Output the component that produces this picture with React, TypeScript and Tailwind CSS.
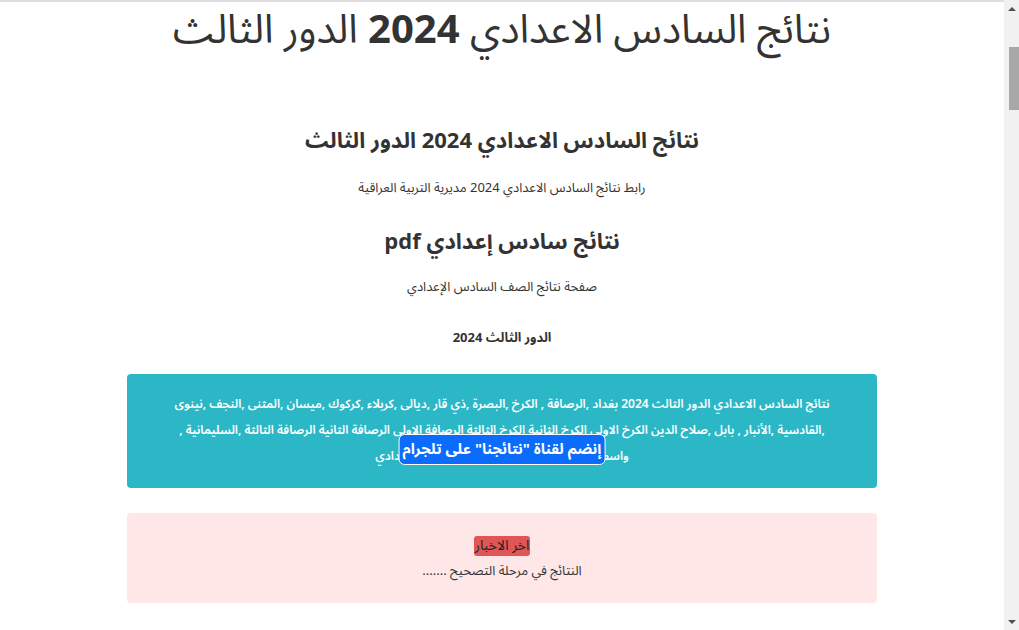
import React from "react";

const lines = [
  "نتائج السادس الاعدادي الدور الثالث 2024 بغداد ,الرصافة , الكرخ ,البصرة ,ذي قار ,ديالى ,كربلاء ,كركوك ,ميسان ,المثنى ,النجف ,نينوى",
  ",القادسية ,الأنبار , بابل ,صلاح الدين الكرخ الاولى الكرخ الثانية الكرخ الثالثة الرصافة الاولى الرصافة الثانية الرصافة الثالثة ,السليمانية ,",
  "واسط ,اربيل ,دهوك ,حلبجة نتائج السادس الاعدادي",
];

function Scrollbar() {
  return (
    <div className="flex h-full w-[15px] shrink-0 flex-col items-center bg-[#f1f1f1]">
      <div className="flex h-[17px] items-center justify-center">
        <div className="h-0 w-0 border-x-[4px] border-b-[4px] border-x-transparent border-b-[#505050]" />
      </div>
      <div className="mt-[30px] h-[63px] w-[10px] self-end bg-[#a8a8a8]" />
      <div className="flex-1" />
      <div className="flex h-[17px] items-center justify-center">
        <div className="h-0 w-0 border-x-[4px] border-t-[4px] border-x-transparent border-t-[#505050]" />
      </div>
    </div>
  );
}

export default function App() {
  return (
    <div
      className="flex h-[630px] overflow-hidden bg-white text-[#333]"
      style={{ fontFamily: '"Noto Sans Arabic", "DejaVu Sans", "Liberation Sans", sans-serif' }}
    >
      <div dir="rtl" className="relative flex-1 overflow-hidden border-t-2 border-[#dedede]">
        <h1 className="pt-[1px] text-center text-[40px] leading-[56px]">
          نتائج السادس الاعدادي <b>2024</b> الدور الثالث
        </h1>

        <div className="mx-auto max-w-[750px] pt-[64px]">
          <h2 className="text-center text-[22px] font-bold leading-[36px]">نتائج السادس الاعدادي 2024 الدور الثالث</h2>
          <p className="mt-[20px] text-center text-[13px] leading-[18px]">رابط نتائج السادس الاعدادي 2024 مديرية التربية العراقية</p>
          <h2 className="mt-[26px] text-center text-[22px] font-bold leading-[38px]">نتائج سادس إعدادي pdf</h2>
          <p className="mt-[17px] text-center text-[13px] leading-[18px]">صفحة نتائج الصف السادس الإعدادي</p>
          <p className="mt-[33px] text-center text-[13px] font-bold leading-[18px]">الدور الثالث 2024</p>

          <div className="mt-[27px] rounded-[4px] bg-[#2bb7c6] px-[20px] pb-[18px] pt-[18px] text-center text-[12px] font-semibold leading-[26px] text-white">
            {lines.map((l) => (
              <div key={l} className="whitespace-nowrap">{l}</div>
            ))}
          </div>

          <div className="mt-[25px] rounded-[4px] bg-[#ffe7e8] px-[20px] pb-[20px] pt-[21px] text-center text-[14px] leading-[24px]">
            <div className="flex h-[24px] items-center justify-center">
              <span className="rounded-[3px] bg-[#e05656] px-[1px] leading-[20px] text-[#222]">اخر الاخبار</span>
            </div>
            <p className="mt-[1px] text-[13px]">النتائج في مرحلة التصحيح .......</p>
          </div>
        </div>

        <a
          href="#"
          className="absolute left-1/2 top-[432px] -translate-x-1/2 whitespace-nowrap rounded-[6px] border border-white bg-[#0b6cfb] px-[3px] text-[15px] font-bold leading-[29px] text-white"
        >
          إنضم لقناة "نتائجنا" على تلجرام
        </a>
      </div>
      <Scrollbar />
    </div>
  );
}
